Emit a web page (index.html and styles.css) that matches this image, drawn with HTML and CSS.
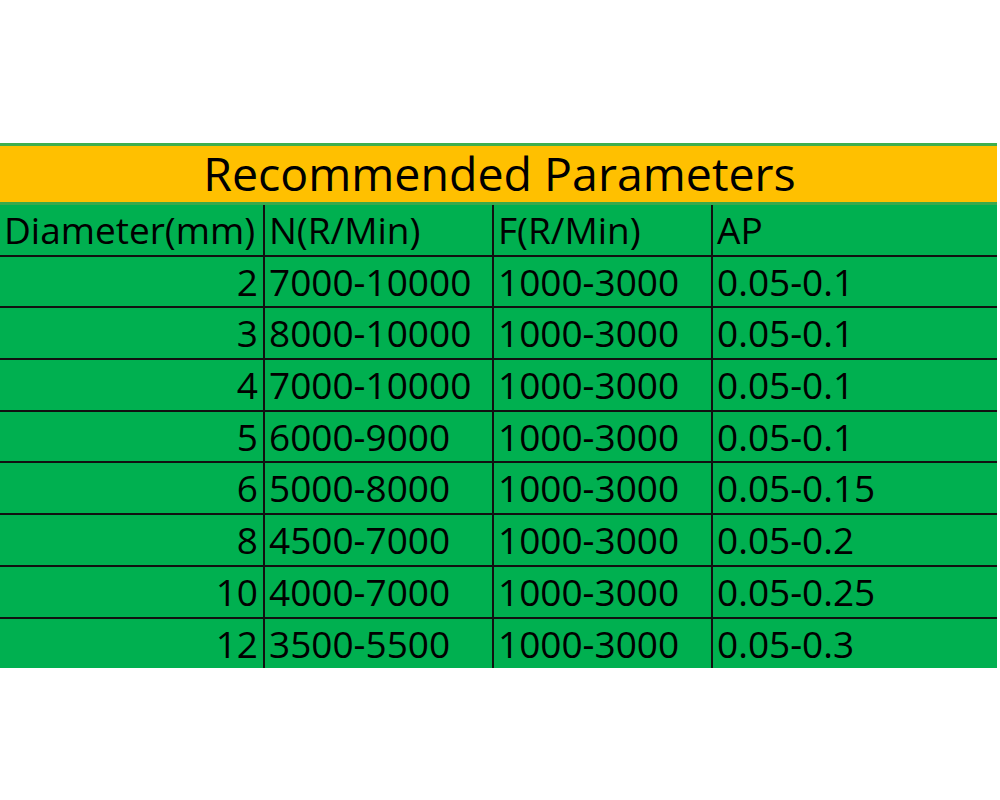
FILE: index.html
```html
<!DOCTYPE html>
<html>
<head>
<meta charset="utf-8">
<link rel="stylesheet" href="styles.css">
</head>
<body>
<div class="sheet">
  <div class="title">Recommended Parameters</div>
  <div class="grid">
    <div class="cell c1 head">Diameter(mm)</div>
    <div class="cell">N(R/Min)</div>
    <div class="cell">F(R/Min)</div>
    <div class="cell">AP</div>

    <div class="cell c1 num">2</div><div class="cell">7000-10000</div><div class="cell">1000-3000</div><div class="cell">0.05-0.1</div>
    <div class="cell c1 num">3</div><div class="cell">8000-10000</div><div class="cell">1000-3000</div><div class="cell">0.05-0.1</div>
    <div class="cell c1 num">4</div><div class="cell">7000-10000</div><div class="cell">1000-3000</div><div class="cell">0.05-0.1</div>
    <div class="cell c1 num">5</div><div class="cell">6000-9000</div><div class="cell">1000-3000</div><div class="cell">0.05-0.1</div>
    <div class="cell c1 num">6</div><div class="cell">5000-8000</div><div class="cell">1000-3000</div><div class="cell">0.05-0.15</div>
    <div class="cell c1 num">8</div><div class="cell">4500-7000</div><div class="cell">1000-3000</div><div class="cell">0.05-0.2</div>
    <div class="cell c1 num">10</div><div class="cell">4000-7000</div><div class="cell">1000-3000</div><div class="cell">0.05-0.25</div>
    <div class="cell c1 num last">12</div><div class="cell last">3500-5500</div><div class="cell last">1000-3000</div><div class="cell last">0.05-0.3</div>
  </div>
</div>
</body>
</html>
```
FILE: styles.css
```css
html, body {
  margin: 0;
  padding: 0;
  background: #ffffff;
}
body {
  font-family: "Open Sans", "Liberation Sans", sans-serif;
  color: #000;
}
.sheet {
  margin-top: 143px;
  width: 997px;
}
.title {
  background: #ffc000;
  border-top: 3px solid #3fae4e;
  border-bottom: 3px solid #3aa94c;
  height: 56px;
  line-height: 54px;
  text-align: center;
  font-size: 46.5px;
  padding-left: 2px;
}
.grid {
  display: grid;
  grid-template-columns: 263px 229px 219px 1fr;
  background: #00b050;
}
.cell {
  height: 49.7px;
  line-height: 49.7px;
  border-bottom: 2px solid #111;
  border-left: 2px solid #111;
  font-size: 37px;
  padding-left: 4px;
  white-space: nowrap;
  overflow: hidden;
}
.cell.c1 {
  border-left: none;
  padding-left: 4px;
}
.cell.num {
  text-align: right;
  padding-right: 5px;
}
.cell.last {
  border-bottom: none;
}
```
